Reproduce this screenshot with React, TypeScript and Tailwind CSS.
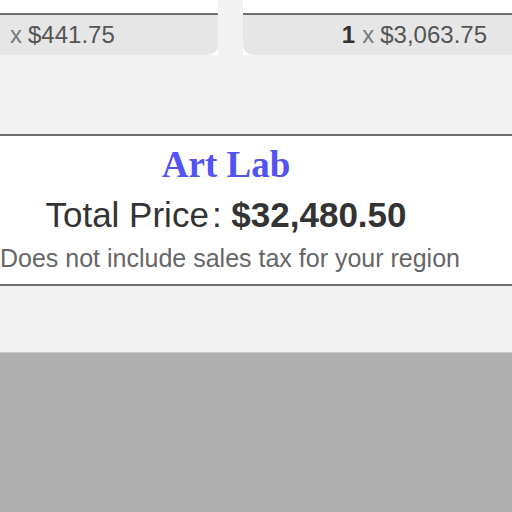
export default function App () {
  return (
    <div className="h-screen overflow-hidden bg-[#f2f2f2] flex flex-col font-['Liberation_Sans',Arial,sans-serif]">
      {/* item cards, cut off at the top */}
      <div className="flex gap-[25px] -ml-[20px] h-[55px] shrink-0">
        <div className="w-[238px] shrink-0 flex flex-col bg-white">
          <div className="h-[13px]" />
          <div className="flex-1 bg-[#e6e6e6] border-t-2 border-[#707070] rounded-b-[10px] flex items-center pl-[30px] text-[24px] text-[#555]">
            <span className="text-[#7a7a7a] mr-[6px]">x</span>
            <span>$441.75</span>
          </div>
        </div>
        <div className="w-[300px] shrink-0 flex flex-col bg-white">
          <div className="h-[13px]" />
          <div className="flex-1 bg-[#e6e6e6] border-t-2 border-[#707070] rounded-b-[10px] flex items-center justify-end pr-[56px] text-[24px] text-[#555]">
            <span className="font-bold text-[#333] mr-[7px]">1</span>
            <span className="text-[#7a7a7a] mr-[6px]">x</span>
            <span>$3,063.75</span>
          </div>
        </div>
      </div>

      {/* total box */}
      <div className="mt-[79px] -ml-[74px] w-[600px] shrink-0 bg-white border-y-2 border-[#6f6f6f] flex flex-col items-center pt-[9px] pb-[11px]">
        <h2 className="font-['Liberation_Serif',serif] font-bold text-[37px] leading-[40px] text-[#5353f5]">Art Lab</h2>
        <p className="mt-[10px] text-[35px] leading-[40px] text-[#333]">
          Total Price<span className="ml-[3px]">:</span> <span className="font-bold">$32,480.50</span>
        </p>
        <p className="mt-[8px] text-[25px] leading-[30px] text-[#666] translate-x-[4px]">Does not include sales tax for your region</p>
      </div>

      <div className="h-[66px] shrink-0" />
      <div className="flex-1 bg-[#b0b0b0] border-t border-[#c9c9c9]" />
    </div>
  )
}
